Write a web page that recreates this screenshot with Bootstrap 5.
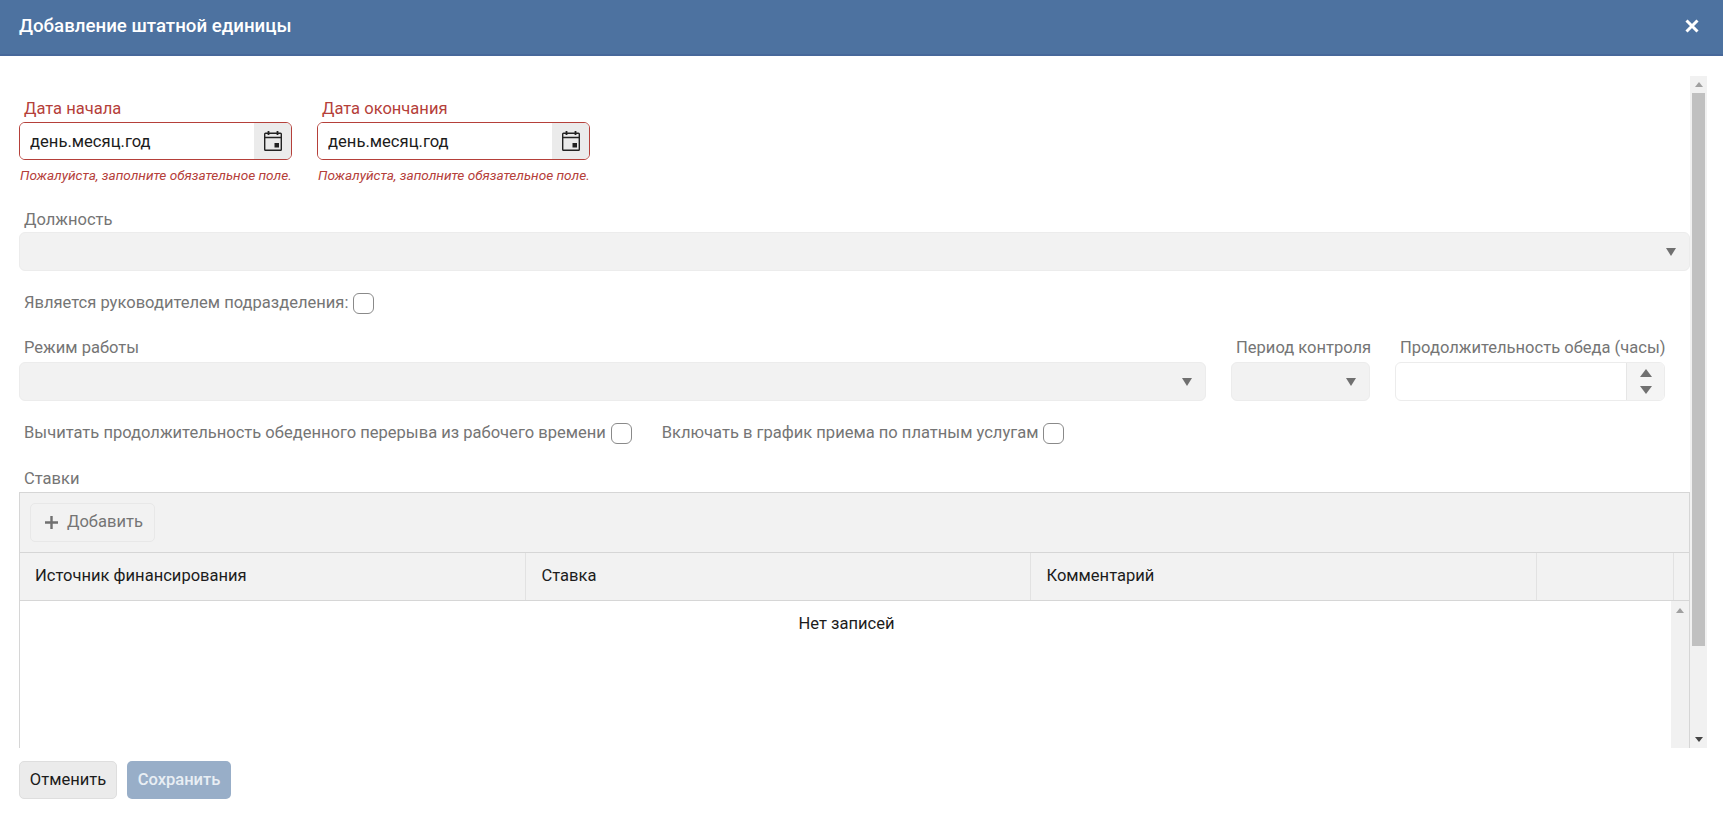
<!DOCTYPE html>
<html lang="ru">
<head>
<meta charset="utf-8">
<title>Добавление штатной единицы</title>
<link href="https://cdn.jsdelivr.net/npm/bootstrap@5.3.0/dist/css/bootstrap.min.css" rel="stylesheet">
<style>
html,body{height:816px;overflow:hidden;background:#fff}
body{font-family:Roboto,"Liberation Sans",sans-serif;font-size:16.55px;color:#1c1c1c}
.dlg-head{height:56px;background:#4d72a0;border-bottom:2px solid #47689a;color:#fff;padding:0 16px 2px 19px}
.dlg-title{font-size:18.7px;font-weight:500;margin:0;line-height:1.2}
.dlg-close{background:none;border:0;padding:0;width:14px;height:14px;line-height:0;margin-right:8px}
.dlg-main{height:692px;padding:20px 16px 0 19px}
.dlg-form{width:1671px;overflow:hidden;padding-top:20px}
.fake-scroll{width:17px;background:#f1f1f1;margin-left:0;flex:none}
.fake-scroll .sb-thumb{background:#c0c0c0;margin:0 2px;flex:none}
.sb-btn{height:17px;flex:none;line-height:0}
.fld-label{display:block;height:26px;line-height:25px;padding-left:5px;margin:0;color:#757575;white-space:nowrap}
.is-req .fld-label{color:#b5403a}
.date-fld{width:273px}
.date-group{height:38px;border:1px solid #b5403a;border-radius:6px;overflow:hidden;flex-wrap:nowrap}
.date-group .form-control{border:0;border-radius:0;height:36px;padding:0 10px;font-size:16.6px;box-shadow:none}
.date-group .form-control::placeholder{color:#1c1c1c;opacity:1}
.date-group .input-group-text{border:0;border-left:1px solid #dcdcdc;border-radius:0;background:#ebebeb;width:38px;padding:0;justify-content:center}
.fld-err{font-size:13.6px;font-style:italic;color:#b5403a;line-height:16px;margin-top:7px;height:16px;white-space:nowrap;padding-left:1px}
.sel-off.form-select{height:39px;border:1px solid #ececec;border-radius:6px;background-color:#f2f2f2;box-shadow:none;
 background-image:url("data:image/svg+xml,%3csvg xmlns='http://www.w3.org/2000/svg' viewBox='0 0 10 8'%3e%3cpath fill='%23707070' d='M0 0h10L5 8z'/%3e%3c/svg%3e");
 background-size:10px 8px;background-position:right 13px center;opacity:1}
.chk-row{height:24px;color:#757575;padding-left:5px;white-space:nowrap}
.chk-box.form-check-input{width:21px;height:21px;margin:0 0 0 5px;border:1px solid #8a8a8a;border-radius:6px;background-color:#fff;opacity:1;flex:none}
.num-box{height:39px;border:1px solid #ececec;border-radius:6px;overflow:hidden}
.num-spin{width:38px;background:#f4f4f4;border-left:1px solid #e6e6e6;gap:9px}
.rate-panel{height:256px;border:solid #d6d6d6;border-width:1px 1px 0;overflow:hidden}
.rate-bar{height:60px;background:#f2f2f2;border-bottom:1px solid #d6d6d6;padding:10px 0 0 10px}
.btn-add.btn{height:39px;width:125px;background:#f2f2f2;border:1px solid #e8e8e8;border-radius:5px;color:#757575;font-size:16.55px;padding:0 0 0 14px;opacity:1;gap:9px}
.rate-table{table-layout:fixed;width:100%;margin:0}
.rate-table th{height:47px;background:#f2f2f2;font-weight:400;padding:0 0 0 16px;border-bottom:1px solid #d6d6d6;border-right:1px solid #e2e2e2;vertical-align:middle;color:#1c1c1c;box-shadow:none}
.rate-table th:first-child{padding-left:15px}
.rate-table th:last-child{border-right:0;padding:0}
.rate-body{height:148px}
.rate-empty{text-align:center;padding-top:10px;line-height:25px;padding-left:2px}
.inner-scroll{width:18px;background:#f1f1f1;flex:none;padding-top:7px}
.dlg-foot{padding:13px 0 0 19px;gap:10px}
.btn-cancel.btn{height:38px;width:98px;padding:0;background:#ebebeb;border:1px solid #dedede;color:#1c1c1c;border-radius:5px;font-size:16.55px}
.btn-save.btn{height:38px;width:104px;padding:0;background:#98aec8;border:0;color:#e9eef4;border-radius:5px;font-size:16.55px;font-weight:500;opacity:1}
</style>
</head>
<body>
<header class="dlg-head d-flex align-items-center justify-content-between">
  <h1 class="dlg-title">Добавление штатной единицы</h1>
  <button class="dlg-close" type="button" aria-label="Закрыть"><svg width="14" height="14" viewBox="0 0 14 14"><path d="M1.5 1.5l11 11M12.5 1.5l-11 11" stroke="#fff" stroke-width="3"/></svg></button>
</header>

<main class="dlg-main d-flex">
  <form class="dlg-form flex-shrink-0">
    <div class="d-flex" style="gap:25px">
      <div class="date-fld is-req">
        <label class="fld-label">Дата начала</label>
        <div class="input-group date-group">
          <input class="form-control" type="text" placeholder="день.месяц.год">
          <span class="input-group-text"><svg width="20" height="22" viewBox="0 0 20 22" fill="none"><rect x="1.700" y="3.200" width="16.600" height="17" rx=".8" stroke="#222" stroke-width="1.400"/><path d="M2 7.500h16" stroke="#222" stroke-width="1.400"/><path d="M5.500 1v4M14.500 1v4" stroke="#222" stroke-width="1.800"/><rect x="11.500" y="13" width="4.500" height="4.500" fill="#222"/></svg></span>
        </div>
        <div class="fld-err">Пожалуйста, заполните обязательное поле.</div>
      </div>
      <div class="date-fld is-req">
        <label class="fld-label">Дата окончания</label>
        <div class="input-group date-group">
          <input class="form-control" type="text" placeholder="день.месяц.год">
          <span class="input-group-text"><svg width="20" height="22" viewBox="0 0 20 22" fill="none"><rect x="1.700" y="3.200" width="16.600" height="17" rx=".8" stroke="#222" stroke-width="1.400"/><path d="M2 7.500h16" stroke="#222" stroke-width="1.400"/><path d="M5.500 1v4M14.500 1v4" stroke="#222" stroke-width="1.800"/><rect x="11.500" y="13" width="4.500" height="4.500" fill="#222"/></svg></span>
        </div>
        <div class="fld-err">Пожалуйста, заполните обязательное поле.</div>
      </div>
    </div>

    <div style="margin-top:24px">
      <label class="fld-label" style="height:25px">Должность</label>
      <select class="form-select sel-off" disabled></select>
    </div>

    <div class="chk-row d-flex align-items-center" style="margin-top:20px">
      <span>Является руководителем подразделения:</span><input class="form-check-input chk-box" type="checkbox" disabled>
    </div>

    <div class="d-flex" style="gap:25px;margin-top:20px">
      <div style="width:1187px">
        <label class="fld-label" style="height:27px">Режим работы</label>
        <select class="form-select sel-off" disabled></select>
      </div>
      <div style="width:139px">
        <label class="fld-label" style="height:27px">Период контроля</label>
        <select class="form-select sel-off" disabled></select>
      </div>
      <div style="width:270px">
        <label class="fld-label" style="height:27px">Продолжительность обеда (часы)</label>
        <div class="num-box d-flex">
          <div class="flex-grow-1"></div>
          <div class="num-spin d-flex flex-column align-items-center justify-content-center">
            <svg width="12" height="8" viewBox="0 0 12 8"><path d="M0 8h12L6 0z" fill="#707070"/></svg>
            <svg width="12" height="8" viewBox="0 0 12 8"><path d="M0 0h12L6 8z" fill="#707070"/></svg>
          </div>
        </div>
      </div>
    </div>

    <div class="chk-row d-flex align-items-center" style="margin-top:20px">
      <span>Вычитать продолжительность обеденного перерыва из рабочего времени</span><input class="form-check-input chk-box" type="checkbox" disabled>
      <span style="margin-left:30px">Включать в график приема по платным услугам</span><input class="form-check-input chk-box" type="checkbox" disabled>
    </div>

    <div style="margin-top:21px">
      <label class="fld-label">Ставки</label>
      <section class="rate-panel">
        <div class="rate-bar">
          <button class="btn btn-add d-inline-flex align-items-center" type="button" disabled><svg width="13" height="13" viewBox="0 0 13 13"><path d="M6.500 0v13M0 6.500h13" stroke="#707070" stroke-width="2.400"/></svg>Добавить</button>
        </div>
        <table class="table rate-table">
          <colgroup><col style="width:505px"><col style="width:505px"><col style="width:506px"><col style="width:137px"><col></colgroup>
          <thead><tr><th>Источник финансирования</th><th>Ставка</th><th>Комментарий</th><th></th><th></th></tr></thead>
        </table>
        <div class="rate-body d-flex">
          <div class="rate-empty flex-grow-1">Нет записей</div>
          <div class="inner-scroll d-flex justify-content-center"><svg width="8" height="5" viewBox="0 0 8 5"><path d="M0 5h8L4 0z" fill="#a0a0a0"/></svg></div>
        </div>
      </section>
    </div>
  </form>

  <aside class="fake-scroll d-flex flex-column">
    <div class="sb-btn d-flex align-items-center justify-content-center"><svg width="8" height="5" viewBox="0 0 8 5"><path d="M0 5h8L4 0z" fill="#a0a0a0"/></svg></div>
    <div class="sb-thumb" style="height:553px"></div>
    <div class="flex-grow-1"></div>
    <div class="sb-btn d-flex align-items-center justify-content-center"><svg width="8" height="5" viewBox="0 0 8 5"><path d="M0 0h8L4 5z" fill="#444"/></svg></div>
  </aside>
</main>

<footer class="dlg-foot d-flex">
  <button class="btn btn-cancel" type="button">Отменить</button>
  <button class="btn btn-save" type="button" disabled>Сохранить</button>
</footer>
</body>
</html>
